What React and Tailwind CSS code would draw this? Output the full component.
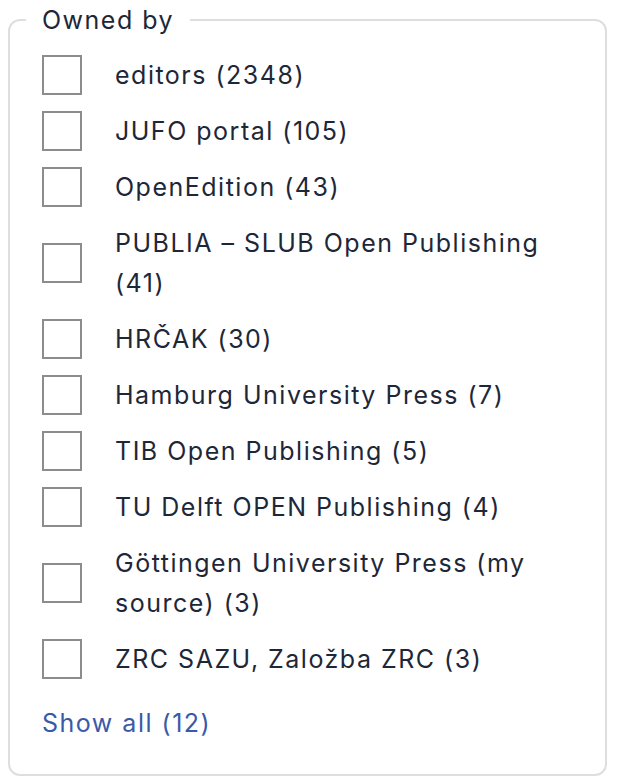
const OWNERS = [
  { name: "editors", count: 2348 },
  { name: "JUFO portal", count: 105 },
  { name: "OpenEdition", count: 43 },
  { name: "PUBLIA – SLUB Open Publishing", count: 41 },
  { name: "HRČAK", count: 30 },
  { name: "Hamburg University Press", count: 7 },
  { name: "TIB Open Publishing", count: 5 },
  { name: "TU Delft OPEN Publishing", count: 4 },
  { name: "Göttingen University Press (my source)", count: 3 },
  { name: "ZRC SAZU, Založba ZRC", count: 3 },
];

const font = { fontFamily: "Inter, 'Noto Sans', sans-serif" };

export default function App() {
  return (
    <div className="bg-white w-[620px] h-[782px]" style={font}>
      <fieldset className="ml-2 w-[599px] border-2 border-[#dedede] rounded-xl px-4 pb-[31px] text-[25px] tracking-[1.5px] text-[#1e2738]">
        <legend className="px-4 leading-10">Owned by</legend>
        <ul className="flex flex-col gap-4 pt-[15px] pl-4">
          {OWNERS.map(o => (
            <li key={o.name}>
              <label className="flex items-center gap-[33px] cursor-pointer">
                <input
                  type="checkbox"
                  className="appearance-none shrink-0 w-10 h-10 border-2 border-[#8c8c8c] bg-white"
                />
                <span className="leading-10 max-w-[456px]">
                  {`${o.name} (${o.count})`}
                </span>
              </label>
            </li>
          ))}
        </ul>
        <button className="mt-6 pl-4 leading-10 text-[#3a5aa8]">
          Show all (12)
        </button>
      </fieldset>
    </div>
  );
}
